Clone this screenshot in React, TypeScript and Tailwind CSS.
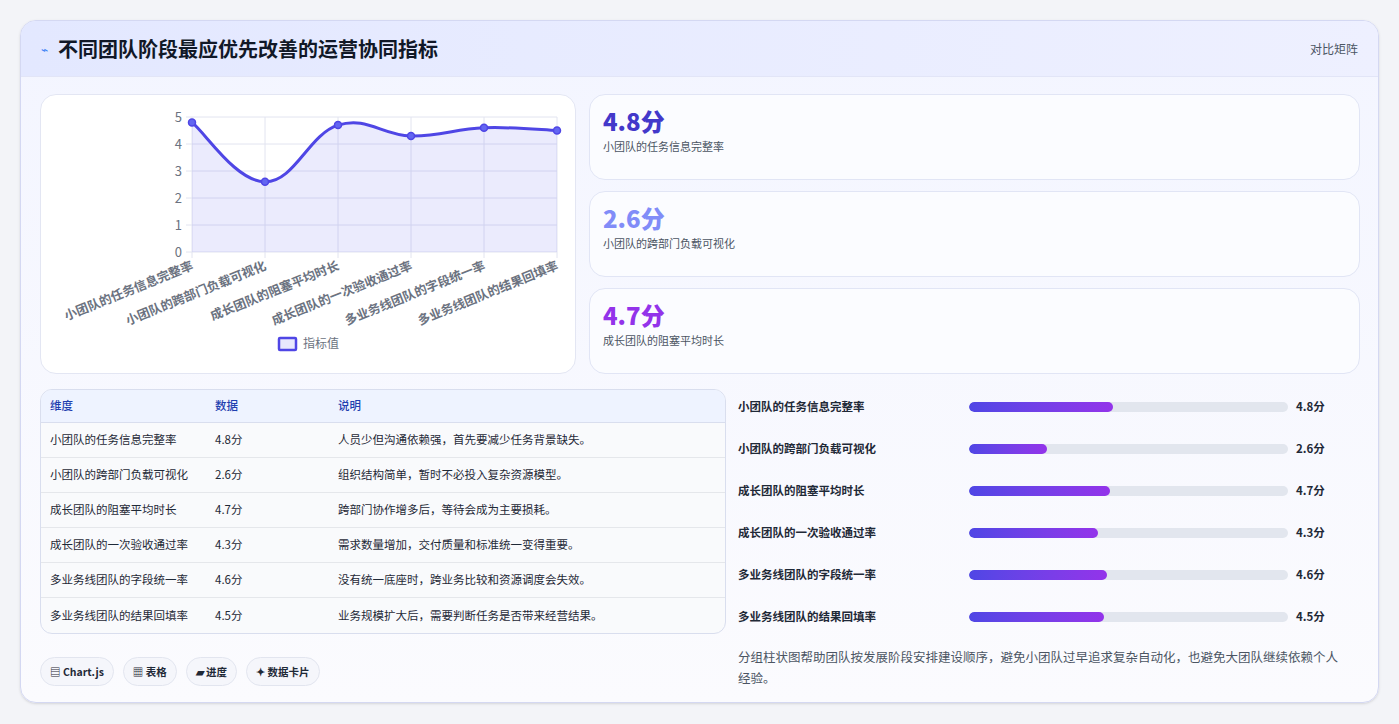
const rows = [
  { name: "小团队的任务信息完整率", v: 4.8, note: "人员少但沟通依赖强，首先要减少任务背景缺失。" },
  { name: "小团队的跨部门负载可视化", v: 2.6, note: "组织结构简单，暂时不必投入复杂资源模型。" },
  { name: "成长团队的阻塞平均时长", v: 4.7, note: "跨部门协作增多后，等待会成为主要损耗。" },
  { name: "成长团队的一次验收通过率", v: 4.3, note: "需求数量增加，交付质量和标准统一变得重要。" },
  { name: "多业务线团队的字段统一率", v: 4.6, note: "没有统一底座时，跨业务比较和资源调度会失效。" },
  { name: "多业务线团队的结果回填率", v: 4.5, note: "业务规模扩大后，需要判断任务是否带来经营结果。" },
];

const font = { fontFamily: '"Noto Sans CJK SC", "Noto Sans", sans-serif' };

function Chart() {
  const L = 151, R = 516, T = 22, B = 157;
  const pts = rows.map((r, i) => [L + (i * (R - L)) / 5, B - r.v * 27] as [number, number]);
  let d = `M${pts[0][0]},${pts[0][1]}`;
  for (let i = 0; i < pts.length - 1; i++) {
    const p0 = pts[i - 1] || pts[i], p1 = pts[i], p2 = pts[i + 1], p3 = pts[i + 2] || p2;
    const t = 0.2;
    const c1 = [p1[0] + (p2[0] - p0[0]) * t, p1[1] + (p2[1] - p0[1]) * t];
    const c2 = [p2[0] - (p3[0] - p1[0]) * t, p2[1] - (p3[1] - p1[1]) * t];
    d += ` C${c1[0]},${c1[1]} ${c2[0]},${c2[1]} ${p2[0]},${p2[1]}`;
  }
  const area = `${d} L${R},${B} L${L},${B} Z`;
  return (
    <svg width="535" height="279" className="block" style={font}>
      {[0, 1, 2, 3, 4, 5].map((n) => (
        <g key={n}>
          <line x1={L - 6} x2={R} y1={B - n * 27} y2={B - n * 27} stroke="#e2e4f0" />
          <text x={L - 10} y={B - n * 27 + 5} textAnchor="end" fontSize="13" fill="#6b7280">{n}</text>
        </g>
      ))}
      {pts.map((p, i) => (
        <line key={i} x1={p[0]} x2={p[0]} y1={T} y2={B + 6} stroke="#e2e4f0" />
      ))}
      <path d={area} fill="rgba(99,102,241,0.13)" />
      <path d={d} fill="none" stroke="#4f46e5" strokeWidth="3" />
      {pts.map((p, i) => (
        <circle key={i} cx={p[0]} cy={p[1]} r="3.5" fill="#6366f1" stroke="#4f46e5" strokeWidth="1.5" />
      ))}
      {rows.map((r, i) => (
        <text key={i} transform={`translate(${pts[i][0] + 2},${B + 17}) rotate(-22)`} textAnchor="end" fontSize="12.5" fontWeight="600" fill="#6b7280">{r.name}</text>
      ))}
      <rect x="238" y="243" width="17" height="12" fill="rgba(99,102,241,0.15)" stroke="#4f46e5" strokeWidth="2.5" rx="1" />
      <text x="262" y="253" fontSize="12" fill="#6b7280">指标值</text>
    </svg>
  );
}

export default function App() {
  const stats = [
    { v: "4.8分", c: "text-[#4338ca]", l: rows[0].name },
    { v: "2.6分", c: "text-[#818cf8]", l: rows[1].name },
    { v: "4.7分", c: "text-[#9333ea]", l: rows[2].name },
  ];
  return (
    <div className="w-[1399px] h-[724px] bg-[#f3f4f8] pt-[20px] pl-[20px]" style={font}>
      <div className="w-[1359px] h-[683px] rounded-2xl border border-[#d4d8f2] bg-gradient-to-b from-[#f3f5ff] to-[#fbfbfe] overflow-hidden shadow-sm">
        <div className="h-[56px] flex items-center justify-between px-[20px] bg-gradient-to-r from-[#e3e8ff] to-[#eef0ff] border-b border-[#e2e5f7]">
          <div className="flex items-center gap-[10px]">
            <span className="text-[#3b82f6] text-[12px]">⌁</span>
            <span className="text-[20px] font-bold text-[#111827]">不同团队阶段最应优先改善的运营协同指标</span>
          </div>
          <span className="text-[12px] text-[#4b5563]">对比矩阵</span>
        </div>
        <div className="px-[19px] pt-[17px] grid grid-cols-[536px_771px] gap-x-[13px]">
          <div className="h-[280px] rounded-2xl border border-[#e3e6f3] bg-white overflow-hidden">
            <Chart />
          </div>
          <div className="flex flex-col gap-[11px]">
            {stats.map((s) => (
              <div key={s.v} className="h-[86px] rounded-2xl border border-[#e1e5f5] bg-[#fbfcff] px-[13px] pt-[10px]">
                <div className={`text-[24px] font-extrabold leading-[32px] ${s.c}`}>{s.v}</div>
                <div className="text-[11px] text-[#4b5563] mt-[1px]">{s.l}</div>
              </div>
            ))}
          </div>
        </div>
        <div className="px-[19px] grid grid-cols-[686px_1fr] gap-x-[12px]">
          <div className="mt-[15px]">
            <div className="rounded-xl border border-[#d9deee] overflow-hidden bg-[#f9fafc] text-[11.5px] text-[#1f2937]">
              <div className="grid grid-cols-[165px_123px_1fr] h-[33px] items-center px-[9px] bg-[#eef3ff] text-[#1e40af] font-medium border-b border-[#d9deee]">
                <span>维度</span><span>数据</span><span>说明</span>
              </div>
              {rows.map((r, i) => (
                <div key={r.name} className={`grid grid-cols-[165px_123px_1fr] h-[35px] items-center px-[9px] ${i < 5 ? "border-b border-[#e5e7eb]" : ""}`}>
                  <span>{r.name}</span><span>{r.v}分</span><span>{r.note}</span>
                </div>
              ))}
            </div>
            <div className="flex gap-[9px] mt-[23px] text-[10.5px] text-[#1f2937] font-semibold">
              {["▤ Chart.js", "▦ 表格", "▰ 进度", "✦ 数据卡片"].map((t) => (
                <span key={t} className="h-[29px] px-[9px] flex items-center rounded-full border border-[#e2e5ef] bg-[#f5f6fb]">{t}</span>
              ))}
            </div>
          </div>
          <div className="mt-[12px]">
            <div className="flex flex-col">
              {rows.map((r) => (
                <div key={r.name} className="h-[42px] flex items-center text-[11.5px] font-semibold text-[#1f2937]">
                  <span className="w-[231px]">{r.name}</span>
                  <div className="w-[319px] h-[10px] rounded-full bg-[#e2e6ee] overflow-hidden">
                    <div className="h-full rounded-full bg-gradient-to-r from-[#4f46e5] to-[#9333ea]" style={{ width: `${r.v * 9.4}%` }} />
                  </div>
                  <span className="ml-[8px]">{r.v}分</span>
                </div>
              ))}
            </div>
            <p className="mt-[8px] text-[12.5px] leading-[21px] text-[#4b5563] pr-[20px]">分组柱状图帮助团队按发展阶段安排建设顺序，避免小团队过早追求复杂自动化，也避免大团队继续依赖个人经验。</p>
          </div>
        </div>
      </div>
    </div>
  );
}
